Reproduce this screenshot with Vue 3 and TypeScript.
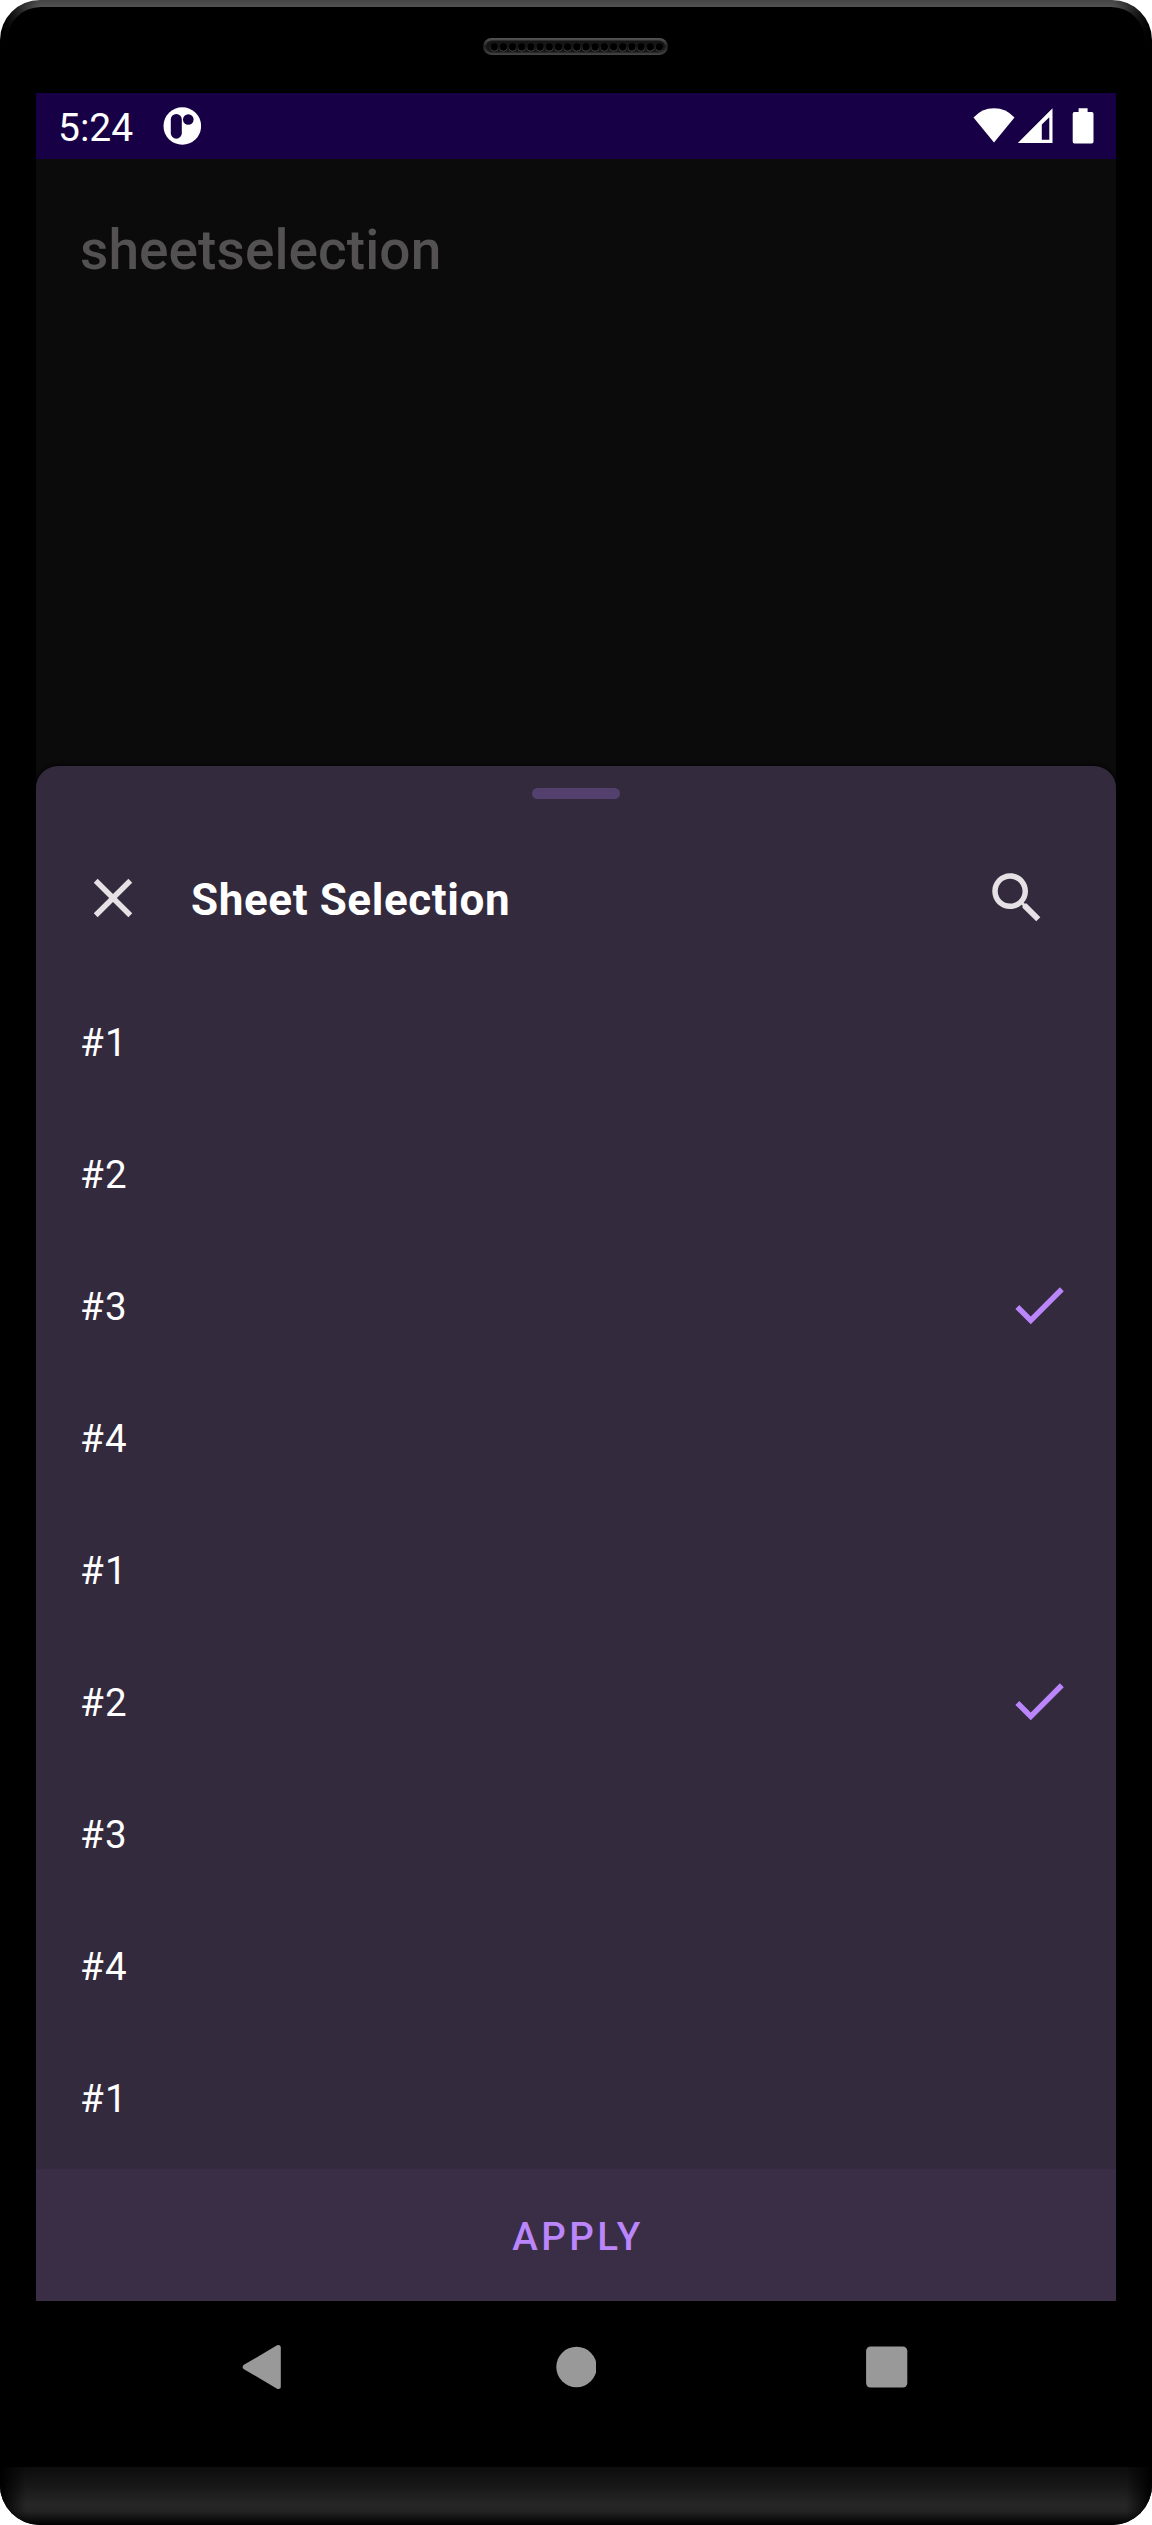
<script setup lang="ts">
interface Option {
  label: string
  selected: boolean
}

const selectedRows = [2, 5]
const options: Option[] = Array.from({ length: 9 }, (_, i) => ({
  label: `#${(i % 4) + 1}`,
  selected: selectedRows.includes(i),
}))

const speakerHoles: number[] = Array.from({ length: 19 }, (_, i) => 11.2 + i * 9.18)
</script>

<template>
  <div class="device">
    <div class="body">
      <header class="earpiece">
        <svg width="186" height="18" viewBox="0 0 186 18">
          <defs>
            <linearGradient id="rim" x1="0" y1="0" x2="0" y2="1">
              <stop offset="0" stop-color="#555" />
              <stop offset="0.5" stop-color="#222" />
              <stop offset="1" stop-color="#444" />
            </linearGradient>
          </defs>
          <rect x="0" y="0" width="185" height="17" rx="8.5" fill="url(#rim)" />
          <rect x="3" y="2.6" width="179" height="12" rx="6" fill="#161616" />
          <g v-for="x in speakerHoles" :key="x">
            <circle :cx="x" cy="9.8" r="3.8" fill="#505050" />
            <circle :cx="x" cy="9" r="3.7" fill="#000" />
          </g>
        </svg>
      </header>

      <main class="screen">
        <div class="status">
          <span class="time">5:24</span>
          <svg class="app-logo" width="38" height="38" viewBox="0 0 38 38">
            <circle cx="19.3" cy="19" r="18.8" fill="#fff" />
            <rect x="7.8" y="6.9" width="11" height="24.8" rx="5.5" fill="#180046" />
            <circle cx="25.3" cy="12.5" r="5.3" fill="#180046" />
          </svg>
          <svg class="indicators" width="122" height="37" viewBox="0 0 122 37" fill="#fff">
            <path d="M0.5 9.6Q8.8 0.3 21 0.3T41.5 9.6L21 34.6Z" />
            <path fill-rule="evenodd" d="M79.5 0.3V35H44.8ZM76.3 9.2L68.8 16.5V31.7H76.3Z" />
            <path d="M105.6 0.2h9v3.9h4.2q1.7 0 1.7 1.7v28q0 1.7-1.7 1.7h-17.4q-1.7 0-1.7-1.7v-28q0-1.7 1.7-1.7h4.2z" />
          </svg>
        </div>

        <div class="backdrop">
          <h1 class="app-title">sheetselection</h1>
        </div>

        <section class="sheet">
          <div class="handle"></div>
          <div class="sheet-bar">
            <svg class="icon" viewBox="0 0 24 24">
              <path d="M19 6.41L17.59 5 12 10.59 6.41 5 5 6.41 10.59 12 5 17.59 6.41 19 12 13.41 17.59 19 19 17.59 13.41 12z" />
            </svg>
            <h2 class="sheet-title">Sheet Selection</h2>
            <svg class="icon" viewBox="0 0 24 24">
              <path d="M15.5 14h-.79l-.28-.27C15.41 12.59 16 11.11 16 9.5 16 5.91 13.09 3 9.5 3S3 5.91 3 9.5 5.91 16 9.5 16c1.61 0 3.09-.59 4.23-1.57l.27.28v.79l5 4.99L20.49 19l-4.99-5zm-6 0C7.01 14 5 11.99 5 9.5S7.01 5 9.5 5 14 7.01 14 9.5 11.99 14 9.5 14z" />
            </svg>
          </div>
          <ul class="options">
            <li v-for="(option, i) in options" :key="i" class="option">
              <span>{{ option.label }}</span>
              <svg v-if="option.selected" class="icon check" viewBox="0 0 24 24">
                <path d="M9 16.17L4.83 12l-1.42 1.41L9 19 21 7l-1.41-1.41z" />
              </svg>
            </li>
          </ul>
          <button class="apply" type="button">APPLY</button>
        </section>
      </main>

      <nav class="nav">
        <svg width="42" height="48" viewBox="0 0 42 48">
          <path d="M4.2 24L37.3 4.5V43.5Z" fill="#999" stroke="#999" stroke-width="5" stroke-linejoin="round" />
        </svg>
        <svg width="42" height="48" viewBox="0 0 42 48">
          <circle cx="22.5" cy="24" r="20.2" fill="#999" />
        </svg>
        <svg width="42" height="48" viewBox="0 0 42 48">
          <rect x="0.1" y="3.4" width="41.2" height="41.2" rx="4.5" fill="#999" />
        </svg>
      </nav>
    </div>
    <footer class="chin"></footer>
  </div>
</template>

<style>
body {
  margin: 0;
  background: #fff;
}
</style>

<style scoped>
.device {
  width: 1152px;
  height: 2525px;
  box-sizing: border-box;
  padding-top: 7px;
  border-radius: 40px;
  overflow: hidden;
  display: flex;
  flex-direction: column;
  background:
    linear-gradient(90deg, #000 2px, transparent 38px, transparent 1114px, #000 1150px),
    linear-gradient(#444 0, #525252 7px, #000 46px);
  font-family: Roboto, "Liberation Sans", sans-serif;
  color: #fff;
}
.body {
  height: 2460px;
  margin: 0 7px;
  border-radius: 34px 34px 0 0;
  background: #000;
  display: flex;
  flex-direction: column;
  align-items: center;
}
.earpiece {
  height: 86px;
  box-sizing: border-box;
  padding-top: 31px;
}
.earpiece svg {
  display: block;
}
.screen {
  width: 1080px;
  height: 2208px;
  background: #0b0b0b;
  display: flex;
  flex-direction: column;
}
.status {
  height: 66px;
  box-sizing: border-box;
  padding: 0 21px 0 22px;
  background: #180046;
  display: flex;
  align-items: center;
}
.time {
  width: 105px;
  padding-top: 4px;
  font-size: 39px;
  line-height: 46px;
}
.indicators {
  margin: 1px 0 0 auto;
}
.backdrop {
  height: 607px;
}
.app-title {
  margin: 0;
  padding: 59px 0 0 44px;
  font-size: 55px;
  line-height: 64px;
  font-weight: 500;
  letter-spacing: 0.08px;
  color: #535152;
}
.sheet {
  height: 1535px;
  border-radius: 22px 22px 0 0;
  background: #342a3e;
  box-shadow: 0 0 5px #000;
  clip-path: inset(-20px 0 0 0);
  display: flex;
  flex-direction: column;
}
.handle {
  width: 88px;
  height: 11px;
  margin: 22px auto 0;
  border-radius: 5.5px;
  background: #54406c;
}
.sheet-bar {
  height: 132px;
  margin-top: 33px;
  padding: 0 66px 0 44px;
  display: flex;
  align-items: center;
}
.icon {
  width: 66px;
  height: 66px;
  flex: none;
  fill: #e6e1e5;
}
.sheet-title {
  flex: 1;
  margin: 4px 0 0 45px;
  font-size: 44px;
  line-height: 52px;
  font-weight: 700;
  letter-spacing: 0.6px;
}
.options {
  list-style: none;
  margin: 12px 0 5px;
  padding: 0;
}
.option {
  height: 132px;
  box-sizing: border-box;
  padding: 0 44px;
  display: flex;
  align-items: center;
  justify-content: space-between;
  font-size: 38.5px;
  letter-spacing: 1.2px;
}
.check {
  margin-bottom: 2px;
  fill: #bb86fc;
}
.apply {
  height: 132px;
  padding: 3px 0 0 4px;
  border: 0;
  background: #392e46;
  color: #bb86fc;
  font: 500 38.5px Roboto, "Liberation Sans", sans-serif;
  letter-spacing: 3.44px;
}
.nav {
  width: 1080px;
  height: 132px;
  box-sizing: border-box;
  padding: 0 208px 0 205px;
  display: flex;
  align-items: center;
  justify-content: space-between;
}
.chin {
  height: 58px;
  background:
    linear-gradient(90deg, #000, transparent 26px, transparent 1126px, #000),
    linear-gradient(#0c0c0c 0, #171717 18px, #262626 38px, #242424 44px, #000 58px);
}
</style>
